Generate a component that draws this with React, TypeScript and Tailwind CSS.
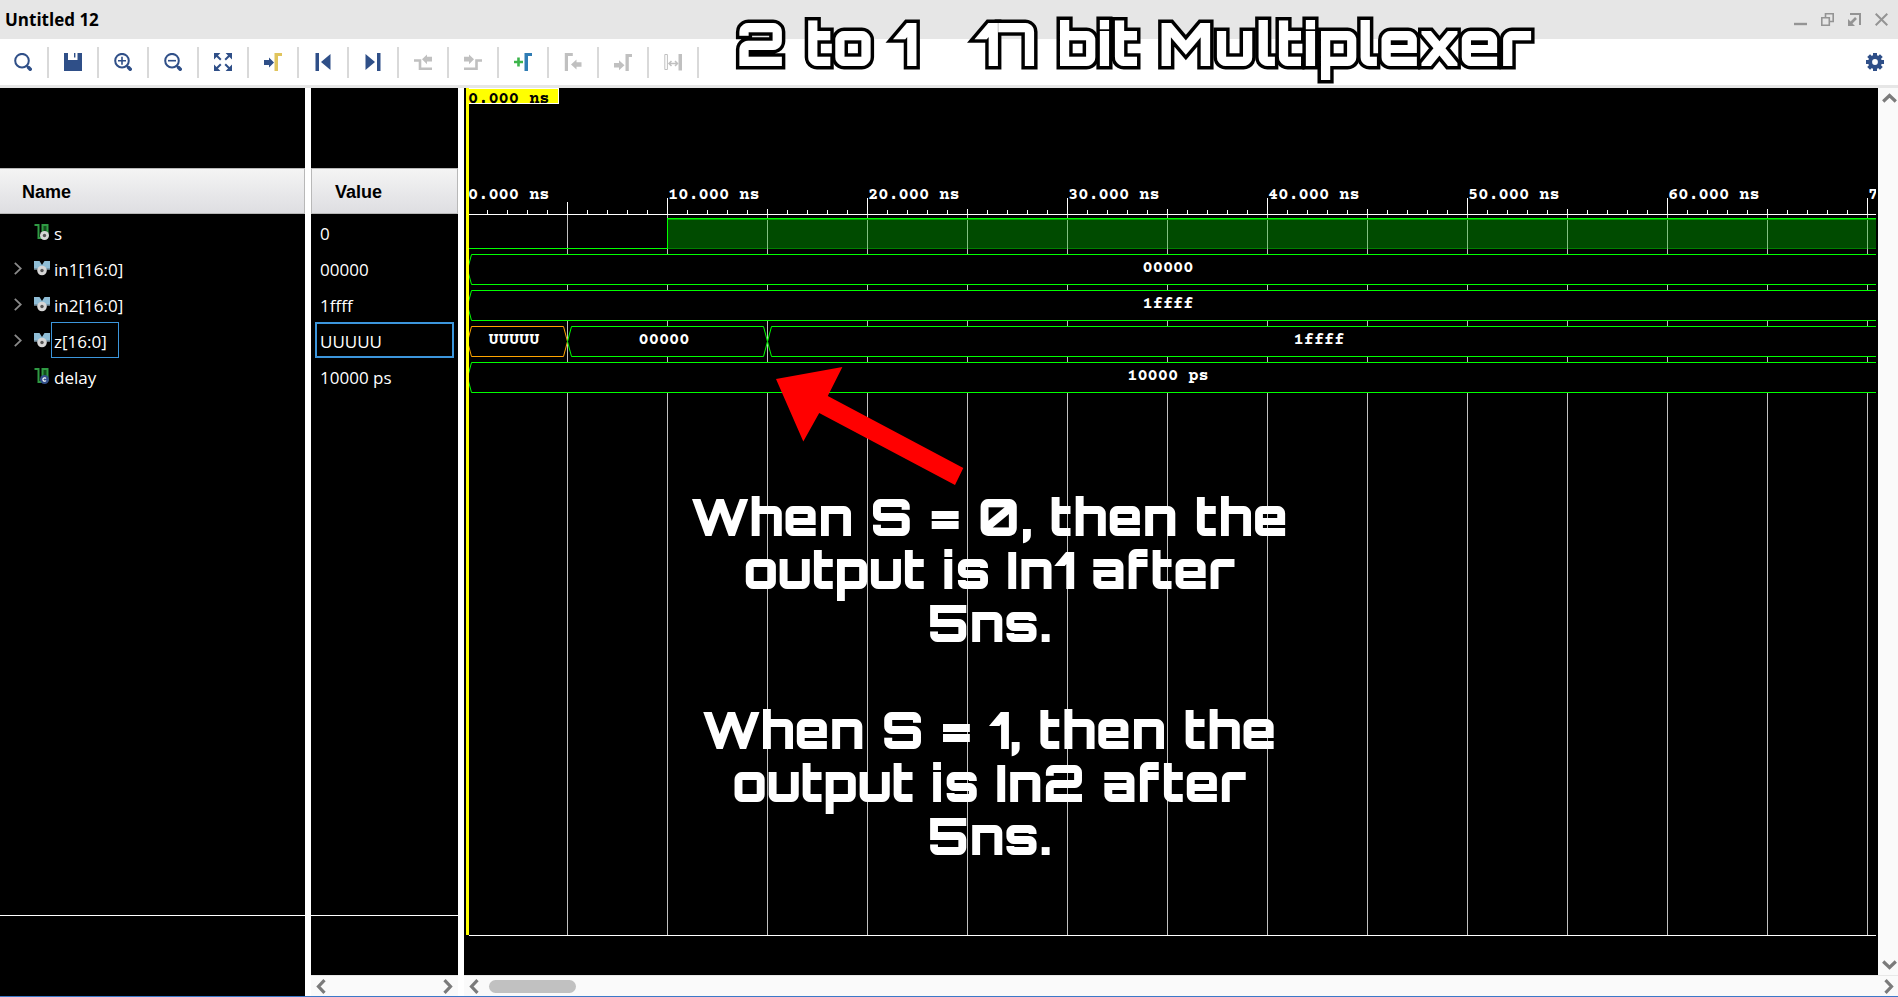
import { useLayoutEffect, useRef, useState, type ReactNode } from 'react';

const BLUE = '#2f4f88';
const GREY = '#c0c0c0';
const GREEN = '#00ff00';
const WIDE = 4000;

type Signal = { name: string; value: string; kind: 'bit' | 'bus' | 'const'; selected?: boolean };

const signals: Signal[] = [
  { name: 's', value: '0', kind: 'bit' },
  { name: 'in1[16:0]', value: '00000', kind: 'bus' },
  { name: 'in2[16:0]', value: '1ffff', kind: 'bus' },
  { name: 'z[16:0]', value: 'UUUUU', kind: 'bus', selected: true },
  { name: 'delay', value: '10000 ps', kind: 'const' },
];

function Magnifier({ children }: { children?: ReactNode }) {
  return (
    <>
      <circle cx="8" cy="7.7" r="6.8" fill="none" stroke={BLUE} strokeWidth="2" />
      <path d="M12.8 12.8L14 14" stroke={BLUE} strokeWidth="2" />
      <path d="M14.6 14.6L16.2 16.2" stroke={BLUE} strokeWidth="3.6" strokeLinecap="round" />
      {children}
    </>
  );
}

const tools: { label: string; icon: ReactNode }[] = [
  { label: 'Search', icon: <Magnifier /> },
  {
    label: 'Save',
    icon: <path fill={BLUE} d="M0 0h4v7h9.5V0H18v18H0zM10 0h1.4v4.6H10z" />,
  },
  {
    label: 'Zoom in',
    icon: (
      <Magnifier>
        <path d="M4 7.7h8M8 3.7v8" stroke={BLUE} strokeWidth="1.6" />
      </Magnifier>
    ),
  },
  {
    label: 'Zoom out',
    icon: (
      <Magnifier>
        <path d="M4 7.7h8" stroke={BLUE} strokeWidth="1.6" />
      </Magnifier>
    ),
  },
  {
    label: 'Zoom fit',
    icon: (
      <g fill={BLUE} stroke={BLUE}>
        <path stroke="none" d="M0 0h6.4L4.5 2 0 6.4zM18 0h-6.4L13.5 2 18 6.4zM0 18h6.4L4.5 16 0 11.6zM18 18h-6.4L13.5 16 18 11.6z" />
        <path strokeWidth="2" d="M2 2l4.8 4.8M16 2l-4.8 4.8M2 16l4.8-4.8M16 16l-4.8-4.8" />
      </g>
    ),
  },
  {
    label: 'Go to cursor',
    icon: (
      <>
        <path fill={BLUE} d="M0 7h5V4.5l5 5-5 5V12H0z" />
        <path fill="#e0c45c" d="M10.5 0H18v3h-4v15h-3.5z" />
      </>
    ),
  },
  { label: 'Go to start', icon: <path fill={BLUE} d="M1.5 0H5v18H1.5zM16.5 1v16L7 9z" /> },
  { label: 'Go to end', icon: <path fill={BLUE} d="M13 0h3.5v18H13zM1.5 1v16L11 9z" /> },
  {
    label: 'Previous transition',
    icon: (
      <>
        <path fill="none" stroke={GREY} strokeWidth="2.6" d="M0 7.5h6v8.2h12" />
        <path fill={GREY} d="M18 3.8h-5V1.5L8 6.3l5 5V8.6h5z" />
      </>
    ),
  },
  {
    label: 'Next transition',
    icon: (
      <>
        <path fill="none" stroke={GREY} strokeWidth="2.6" d="M0 15.7h12.5V7.5H18" />
        <path fill={GREY} d="M0 3.8h5V1.5l5 4.8-5 5V8.6H0z" />
      </>
    ),
  },
  {
    label: 'Add marker',
    icon: (
      <>
        <path stroke="#3cb44b" strokeWidth="2.6" d="M0 9h9M4.5 4.5v9" />
        <path fill="#2f7cb4" d="M10.5 0H18v3h-4v15h-3.5z" />
      </>
    ),
  },
  {
    label: 'Previous marker',
    icon: (
      <>
        <path fill={GREY} d="M.8 0h8v3H4v15H.8z" />
        <path fill={GREY} d="M17.5 9.2h-5V6.5l-5.5 5 5.5 5v-2.7h5z" />
      </>
    ),
  },
  {
    label: 'Next marker',
    icon: (
      <>
        <path fill={GREY} d="M11.5 1H18v3h-3.2v14h-3.3z" />
        <path fill={GREY} d="M0 10h5V7.2l5.5 5-5.5 5v-2.7H0z" />
      </>
    ),
  },
  {
    label: 'Swap markers',
    icon: (
      <>
        <path fill="none" stroke={GREY} d="M.8 1.5h2.6v15H.8z" />
        <path fill={GREY} d="M14.5 1H18v16.5h-3.5z" />
        <path fill="none" stroke={GREY} strokeWidth="1.5" d="M5 10.5h8.5M7.5 8L5 10.5 7.5 13M11 8l2.5 2.5L11 13" />
      </>
    ),
  },
];

const windowControls: { label: string; icon: ReactNode }[] = [
  { label: 'Minimize', icon: <path strokeWidth="2.4" d="M0 11h13" /> },
  { label: 'Restore', icon: <path d="M.8 4.8h7.5v7.5H.8zM4.5 4.5V.8h7.7v7.7H8.5" /> },
  {
    label: 'Float',
    icon: (
      <>
        <path strokeWidth="2" d="M2 1h10v11" />
        <path strokeWidth="2.6" d="M8 5L3 10" />
        <path stroke="none" fill="#949494" d="M0 6v7h7z" />
      </>
    ),
  },
  { label: 'Close', icon: <path strokeWidth="2" d="M.7.7l11.6 11.6M12.3.7L.7 12.3" /> },
];

function Chevron({ d, w, h }: { d: string; w: number; h: number }) {
  return (
    <svg width={w} height={h} viewBox={`0 0 ${w} ${h}`} fill="none" stroke="#7b7b7b" strokeWidth="3.2" aria-hidden="true">
      <path d={d} />
    </svg>
  );
}

const LEFT = 'M8.5 1.2L2.5 7.5l6 6.3';
const RIGHT = 'M1.5 1.2l6 6.3-6 6.3';

function SignalIcon({ kind }: { kind: Signal['kind'] }) {
  if (kind === 'bus') {
    return (
      <svg width="16" height="15" viewBox="0 0 16 15" aria-hidden="true">
        <path fill="#8fbdd6" d="M0 0h5.5L8 4l2.5-4H16v8.5H0z" />
        <path fill="#5b6f7c" d="M0 7.5h16v1.5H0z" />
        <circle cx="8" cy="9.5" r="4.8" fill="#d6d6d6" />
        <circle cx="8" cy="9.5" r="1.7" fill="#555" />
      </svg>
    );
  }
  return (
    <svg width="16" height="16" viewBox="0 0 16 16" aria-hidden="true">
      <path fill="#134d1d" d="M8 1h5.5v13H8z" />
      <path fill="none" stroke="#2f9a43" strokeWidth="2" d="M.5 1H4.5v13h4V1H13.5v12" />
      <circle cx="10.5" cy="11.5" r="4.5" fill={kind === 'bit' ? '#d6d6d6' : '#33508c'} />
      {kind === 'bit' ? (
        <circle cx="10.5" cy="11.5" r="1.7" fill="#555" />
      ) : (
        <path fill="none" stroke="#fff" strokeWidth="1.2" d="M12 10.5a1.7 1.7 0 1 0 0 2" />
      )}
    </svg>
  );
}

function BusSegment({ from, to, top, color }: { from: number; to: number; top: number; color: string }) {
  const mid = top + 15;
  const bottom = top + 30;
  return (
    <path
      fill="#000"
      stroke={color}
      d={`M${from} ${mid}L${from + 4} ${top}H${to - 4}L${to} ${mid}L${to - 4} ${bottom}H${from + 4}Z`}
    />
  );
}

function Waveform() {
  const ref = useRef<SVGSVGElement>(null);
  const [width, setWidth] = useState(1400);

  useLayoutEffect(() => {
    const el = ref.current;
    if (!el) return;
    const measure = () => setWidth(el.getBoundingClientRect().width);
    measure();
    const observer = new ResizeObserver(measure);
    observer.observe(el);
    return () => observer.disconnect();
  }, []);

  const grid = Array.from({ length: Math.floor(width / 100) }, (_, i) => i + 1);
  const minor = Array.from({ length: Math.floor(width / 20) }, (_, i) => i + 1).filter((i) => i % 5 !== 0);
  const labels = Array.from({ length: Math.ceil((width - 5) / 200) }, (_, i) => i);

  return (
    <svg
      ref={ref}
      className="block min-h-0 w-full flex-1 font-['Courier_Prime','Liberation_Mono',monospace] text-[17px] font-bold"
      role="img"
      aria-label="Waveform"
    >
      <g shapeRendering="crispEdges">
        {grid.map((i) => (
          <g key={i}>
            <rect x={3 + i * 100} y={126} width="1" height="100%" fill="#c0c0c0" />
            <rect x={3 + i * 100} y={i % 2 === 0 ? 110 : i === 1 ? 114 : 121} width="1" height={i % 2 === 0 ? 16 : i === 1 ? 12 : 5} fill="#fff" />
          </g>
        ))}
        {minor.map((i) => (
          <rect key={i} x={3 + i * 20} y="122" width="1" height="4" fill="#fff" />
        ))}
        <rect x="5" y="126" width="100%" height="1" fill="#fff" />
        <rect x="5" y="160" width="198" height="1" fill={GREEN} />
        <rect x="203" y="130" width="100%" height="31" fill="#004b00" />
        <rect x="203" y="160" width="100%" height="1" fill="#008000" />
        {grid.slice(2).map((i) => (
          <rect key={i} x={3 + i * 100} y="131" width="1" height="30" fill="#80c080" />
        ))}
        <rect x="203" y="131" width="100%" height="1" fill="#00a000" />
        <rect x="203" y="130" width="100%" height="1" fill={GREEN} />
        <rect x="203" y="130" width="1" height="31" fill={GREEN} />
      </g>
      <g transform="translate(.5 .5)">
        <BusSegment from={3} to={WIDE} top={166} color={GREEN} />
        <BusSegment from={3} to={WIDE} top={202} color={GREEN} />
        <BusSegment from={3} to={103} top={238} color="#ffa500" />
        <BusSegment from={103} to={303} top={238} color={GREEN} />
        <BusSegment from={303} to={WIDE} top={238} color={GREEN} />
        <BusSegment from={3} to={WIDE} top={274} color={GREEN} />
      </g>
      <g fill="#fff">
        {labels.map((i) => (
          <text key={i} x={4 + i * 200} y="111">
            {i * 10}.000 ns
          </text>
        ))}
        <g textAnchor="middle">
          <text x="50%" y="184" dx="-2">00000</text>
          <text x="50%" y="220" dx="-2">1ffff</text>
          <text x="50" y="256">UUUUU</text>
          <text x="200" y="256">00000</text>
          <text x="50%" y="256" dx="149">1ffff</text>
          <text x="50%" y="292" dx="-2">10000 ps</text>
        </g>
      </g>
      <rect x="2" y="0" width="93" height="16" fill="#fff" />
      <rect x="2" y="1" width="92" height="14" fill="#ff0" />
      <rect x="2" y="0" width="3" height="100%" fill="#ff0" />
      <text x="4" y="15" fill="#000">0.000 ns</text>
    </svg>
  );
}

const headerCell =
  "flex h-[46px] shrink-0 items-center border border-[#b8b8b8] bg-linear-to-b from-[#f4f4f4] to-[#dedee2] pt-[2px] text-[18px] font-bold text-black font-['Liberation_Sans',Arial,sans-serif]";

export default function App() {
  return (
    <div className="relative flex h-screen flex-col overflow-hidden border-b border-[#3c78c8] bg-white font-['Open_Sans','Noto_Sans',sans-serif]">
      <header className="flex h-[39px] shrink-0 items-center justify-between bg-[#e6e6e6] pr-[10px] pl-[5px]">
        <h1 className="text-[17px] font-bold text-black">Untitled 12</h1>
        <div className="flex gap-[14px]">
          {windowControls.map((c) => (
            <button key={c.label} type="button" aria-label={c.label}>
              <svg width="13" height="13" viewBox="0 0 13 13" fill="none" stroke="#949494" strokeWidth="1.6" aria-hidden="true">
                {c.icon}
              </svg>
            </button>
          ))}
        </div>
      </header>

      <div className="flex h-[49px] shrink-0 items-center justify-between border-b-3 border-[#e6e6e6] bg-white pr-[14px]">
        <div className="-ml-px flex">
          {tools.map((t) => (
            <button
              key={t.label}
              type="button"
              aria-label={t.label}
              className="flex h-[31px] w-[50px] items-center justify-center border-r-2 border-[#d9d9d9]"
            >
              <svg width="18" height="18" viewBox="0 0 18 18" aria-hidden="true">
                {t.icon}
              </svg>
            </button>
          ))}
        </div>
        <button type="button" aria-label="Settings">
          <svg width="18" height="18" viewBox="-9 -9 18 18" aria-hidden="true">
            {[0, 45, 90, 135].map((a) => (
              <rect key={a} x="-2" y="-9" width="4" height="18" fill={BLUE} transform={`rotate(${a})`} />
            ))}
            <circle r="4.9" fill="none" stroke={BLUE} strokeWidth="4" />
            <circle r="2.9" fill="#fff" />
          </svg>
        </button>
      </div>

      <main className="flex min-h-0 flex-1">
        <section aria-label="Names" className="flex w-[305px] shrink-0 flex-col bg-black text-[17px] text-white">
          <div className="h-20 shrink-0" />
          <h2 className={`${headerCell} border-l-0 pl-[22px]`}>Name</h2>
          <ul>
            {signals.map((s) => (
              <li key={s.name} className="flex h-9 items-center">
                <span className="flex w-[34px] justify-center pl-[2px]">
                  {s.kind === 'bus' && (
                    <button type="button" aria-label={`Expand ${s.name}`}>
                      <svg width="8" height="13" viewBox="0 0 8 13" fill="none" stroke="#8a8a8a" strokeWidth="1.8" aria-hidden="true">
                        <path d="M.8.8l6 5.7-6 5.7" />
                      </svg>
                    </button>
                  )}
                </span>
                <span className="flex w-[17px] pr-px">
                  <SignalIcon kind={s.kind} />
                </span>
                <span
                  className={
                    s.selected
                      ? 'flex h-9 w-[68px] items-center border border-[#3c96dc] pt-[3px] pl-[2px]'
                      : 'flex h-9 items-center border border-transparent pt-[3px] pl-[2px]'
                  }
                >
                  {s.name}
                </span>
              </li>
            ))}
          </ul>
          <div className="flex-1" />
          <div className="h-[81px] shrink-0 border-t border-white" />
        </section>

        <section aria-label="Values" className="ml-[6px] flex w-[147px] shrink-0 flex-col bg-black text-[17px] text-white">
          <div className="h-20 shrink-0" />
          <h2 className={`${headerCell} pl-[23px]`}>Value</h2>
          <ul className="px-1">
            {signals.map((s) => (
              <li
                key={s.name}
                className={
                  s.selected
                    ? 'flex h-9 items-center border-2 border-[#3c96dc] pt-[3px] pl-[3px]'
                    : 'flex h-9 items-center border-2 border-transparent pt-[3px] pl-[3px]'
                }
              >
                {s.value}
              </li>
            ))}
          </ul>
          <div className="flex-1" />
          <div className="h-[60px] shrink-0 border-t border-white" />
          <div className="flex h-[21px] shrink-0 items-center justify-between border-t border-[#e8e8e8] bg-[#fafafa] px-[5px]">
            <button type="button" aria-label="Scroll values left">
              <Chevron d={LEFT} w={10} h={15} />
            </button>
            <button type="button" aria-label="Scroll values right">
              <Chevron d={RIGHT} w={10} h={15} />
            </button>
          </div>
        </section>

        <section aria-label="Waveforms" className="ml-[6px] flex min-w-0 flex-1 flex-col">
          <div className="flex min-h-0 flex-1">
            <div className="relative flex min-w-0 flex-1 flex-col overflow-hidden bg-black pr-[2px]">
              <Waveform />
              <div className="ml-[5px] h-10 shrink-0 border-t border-white" />

              <svg className="absolute top-[278px] left-[311px]" width="190" height="120" viewBox="775 366 190 120" aria-hidden="true">
                <path fill="#f00" d="M776 379L842.4 367 827.8 396 963.3 468 955 485 819.2 413 803.3 441.5z" />
              </svg>
              <div className="absolute top-[402px] left-[225px] flex w-[600px] flex-col gap-[54px] text-center font-[Orbitron,'DejaVu_Sans',sans-serif] text-[51px] leading-[53px] font-black whitespace-nowrap text-white">
                <p>
                  When S = 0, then the
                  <br />
                  output is In1 after
                  <br />
                  5ns.
                </p>
                <p>
                  When S = 1, then the
                  <br />
                  output is In2 after
                  <br />
                  5ns.
                </p>
              </div>
            </div>
            <div className="flex w-5 shrink-0 flex-col items-center justify-between bg-[#fafafa] py-[5px] pl-[2px]">
              <button type="button" aria-label="Scroll up">
                <Chevron d="M1.2 8.5l6.3-6 6.3 6" w={15} h={10} />
              </button>
              <button type="button" aria-label="Scroll down">
                <Chevron d="M1.2 1.5l6.3 6 6.3-6" w={15} h={10} />
              </button>
            </div>
          </div>
          <div className="flex h-[21px] shrink-0 items-center border-t border-[#e8e8e8] bg-[#fafafa] pr-1 pl-[5px]">
            <button type="button" aria-label="Scroll left">
              <Chevron d={LEFT} w={10} h={15} />
            </button>
            <div className="ml-[10px] h-[13px] w-[87px] rounded-full bg-[#c1c1c1]" />
            <button type="button" aria-label="Scroll right" className="ml-auto">
              <Chevron d={RIGHT} w={10} h={15} />
            </button>
          </div>
        </section>
      </main>

      <p className="absolute top-[7px] left-[736px] font-[Orbitron,'DejaVu_Sans',sans-serif] text-[60px] leading-[72px] font-black whitespace-pre text-white [-webkit-text-stroke:7px_black] [paint-order:stroke_fill]">
        2 to 1   17 bit Multiplexer
      </p>
    </div>
  );
}
